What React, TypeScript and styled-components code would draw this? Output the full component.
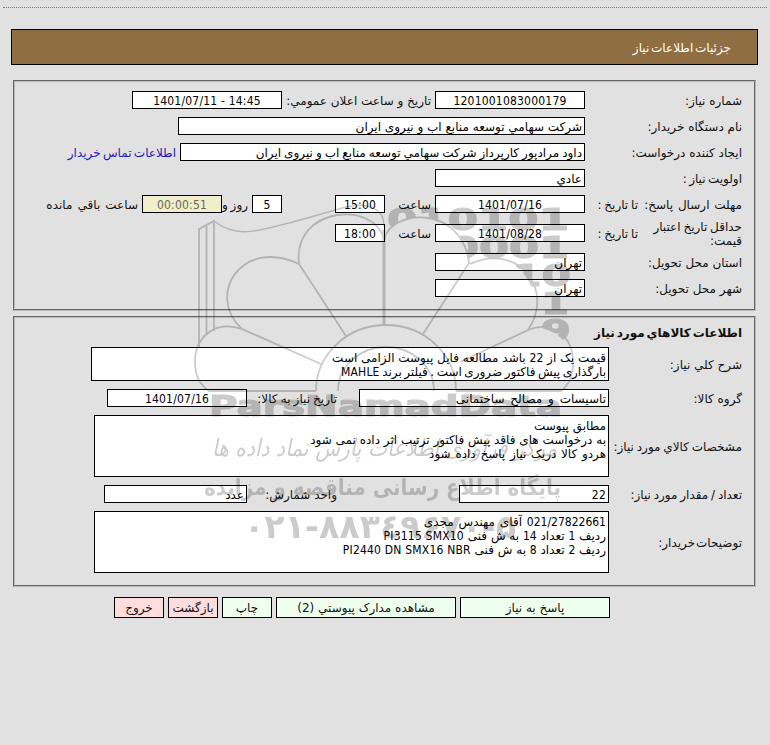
import React from "react";
import styled, { createGlobalStyle } from "styled-components";

const GlobalStyle = createGlobalStyle`
  *, *::before, *::after { box-sizing: border-box; }
  body {
    margin: 0;
    background: #e1e1e1;
    color: #111;
    font: 12px/14px "DejaVu Sans", Tahoma, sans-serif;
  }
`;

const Page = styled.div`
  position: relative;
  width: 770px;
  height: 745px;
  overflow: hidden;
  direction: rtl;
`;

const TopRule = styled.div`
  margin: 7px 3px 0 3px;
  border-top: 1px dotted #777;
`;

const TitleBar = styled.header`
  display: flex;
  align-items: center;
  height: 36px;
  margin: 21px 12px 0 11px;
  padding: 2px 26px 0;
  border: 1px solid #000;
  background: #8f6e43;
  color: #fff;
  word-spacing: -2px;
`;

const Section = styled.section<{ $h: number; $gap: number }>`
  width: 743px;
  height: ${(p) => p.$h}px;
  margin: ${(p) => p.$gap}px 14px 0 13px;
  padding: 9px 12px 0 0;
  border: 2px groove #b9b9b9;
`;

const Row = styled.div<{ $h?: number; $gap?: number }>`
  display: flex;
  align-items: center;
  height: ${(p) => p.$h ?? 18}px;
  margin-bottom: ${(p) => p.$gap ?? 8}px;
`;

const Cell = styled.span<{ $w: number; $ws?: number }>`
  flex: none;
  width: ${(p) => p.$w}px;
  padding-top: 1px;
  white-space: nowrap;
  word-spacing: ${(p) => p.$ws ?? 0}px;
`;

const Wrapped = styled(Cell)`
  white-space: normal;
  padding-left: 8px;
`;

const Field = styled.div<{ $w: number; $ws?: number }>`
  flex: none;
  width: ${(p) => p.$w}px;
  height: 18px;
  padding: 1px 2px 0;
  border: 1px solid #000;
  background: #fff;
  color: #000;
  line-height: 16px;
  white-space: nowrap;
  word-spacing: ${(p) => p.$ws ?? 0}px;
`;

const NumberField = styled(Field)<{ $muted?: boolean; $start?: boolean }>`
  background: ${(p) => (p.$muted ? "#f0eecb" : "#fff")};
  color: ${(p) => (p.$muted ? "#6a6a58" : "#000")};
  direction: ltr;
  text-align: ${(p) => (p.$start ? "right" : "center")};
  font-family: "DejaVu Sans Condensed", "DejaVu Sans", sans-serif;
  font-stretch: condensed;
  letter-spacing: 0.2px;
`;

const Latin = styled.bdi`
  font-family: "DejaVu Sans Condensed", "DejaVu Sans", sans-serif;
  font-stretch: condensed;
  letter-spacing: 0.2px;
`;

const Area = styled(Field)`
  height: 100%;
  padding: 3px 2px 2px;
  line-height: 14px;
`;

const Line = styled.div<{ $ws?: number }>`
  word-spacing: ${(p) => p.$ws ?? 0}px;
`;

const Gap = styled.span<{ $w: number }>`
  flex: none;
  width: ${(p) => p.$w}px;
`;

const ContactLink = styled.a`
  padding-top: 1px;
  color: #1a1ab8;
  white-space: nowrap;
  word-spacing: -1.5px;
`;

const Heading = styled.h2`
  height: 20px;
  margin: 0;
  font-size: 12px;
  line-height: 12px;
  word-spacing: -2.3px;
`;

const Actions = styled.nav`
  display: flex;
  gap: 4px;
  margin: 10px 160px 0 0;
`;

const Button = styled.button<{ $w: number; $danger?: boolean }>`
  width: ${(p) => p.$w}px;
  height: 21px;
  padding: 0;
  border: 1px solid #000;
  background: ${(p) => (p.$danger ? "#ffdddd" : "#eeffee")};
  color: #111;
  font: inherit;
  white-space: nowrap;
`;

const Mark = styled.svg`
  position: absolute;
  top: 190px;
  left: 180px;
  pointer-events: none;
  opacity: 0.2;
`;

const wide = { lengthAdjust: "spacingAndGlyphs" as const, direction: "ltr" };

function Watermark() {
  return (
    <Mark width="400" height="370" viewBox="180 190 400 370">
      <defs>
        <mask id="petals" maskUnits="userSpaceOnUse" x="180" y="190" width="400" height="210">
          <rect x="180" y="190" width="400" height="210" fill="#fff" />
          <path
            fill="#000"
            d="M384 325V240C390 209 462 204 469 263C512 244 548 285 530 328C546 326 560 334 567 345V391H384Z"
          />
        </mask>
      </defs>
      <g
        mask="url(#petals)"
        fontFamily="DejaVu Sans"
        fontWeight="bold"
        fontSize="30"
        stroke="#000"
        strokeWidth="1.2"
      >
        <text x="387" y="230" textLength="182" {...wide}>010101</text>
        <text x="449" y="258" textLength="120" {...wide}>0001</text>
        <text x="512" y="286" textLength="59" {...wide}>10</text>
        <text x="541" y="314" textLength="28" {...wide}>1</text>
        <text x="541" y="341" textLength="30" {...wide}>9</text>
      </g>
      <g fill="none" stroke="#000" strokeWidth="1.8">
        <path d="M199 347V229L214 221V331M206.500 335V226" />
        <path d="M214 221C238 240 262 230 300 220L346 207C368 202 384 208 384 226" strokeWidth="1.3" />
        <path d="M384 325V230" strokeWidth="3" />
        <path d="M346 336L299 264C292 206 376 200 384 240" />
        <path d="M321 364L242 329C205 295 242 237 299 264" />
        <path d="M242 329C212 319 195 340 195 362Q195 382 209 391H316" />
        <path d="M423 334L469 263C462 204 390 209 384 240" />
        <path d="M460 362L528 330C556 288 516 242 470 264" />
        <path d="M528 330C552 320 573 336 573 362Q573 382 561 391H456" />
        <path d="M316 391A70 66 0 0 1 456 391M338 391A48 44 0 0 1 434 391" />
      </g>
      <g fontFamily="DejaVu Sans" fontWeight="bold">
        <text x="209" y="416" fontSize="28" textLength="353" stroke="#000" strokeWidth="1.2" {...wide}>
          ParsNamadData
        </text>
        <text x="204" y="495" fontSize="23" textLength="357" {...wide}>
          پایگاه اطلاع رسانی مناقصه و مزایده
        </text>
        <text x="244" y="538" fontSize="33" textLength="272" {...wide}>۰۲۱-۸۸۳٤۹۶۷۰-۵</text>
      </g>
      <text x="212" y="456" fontFamily="DejaVu Sans" fontStyle="italic" fontSize="24" textLength="345" {...wide}>
        مرکز فرآوری اطلاعات پارس نماد داده ها
      </text>
    </Mark>
  );
}

export default function App() {
  return (
    <>
      <GlobalStyle />
      <Page>
        <TopRule />
        <TitleBar>جزئیات اطلاعات نیاز</TitleBar>

        <Section $h={231} $gap={15}>
          <Row>
            <Cell $w={157}>شماره نیاز:</Cell>
            <NumberField $w={150}>1201001083000179</NumberField>
            <Gap $w={4} />
            <Cell $w={149}>تاریخ و ساعت اعلان عمومي:</Cell>
            <NumberField $w={150}>1401/07/11 - 14:45</NumberField>
          </Row>
          <Row>
            <Cell $w={157}>نام دستگاه خریدار:</Cell>
            <Field $w={407}>شرکت سهامي توسعه منابع اب و نیروی ایران</Field>
          </Row>
          <Row>
            <Cell $w={157}>ایجاد کننده درخواست:</Cell>
            <Field $w={405} $ws={-0.8}>داود مرادپور کارپرداز شرکت سهامي توسعه منابع اب و نیروی ایران</Field>
            <Gap $w={4} />
            <ContactLink>اطلاعات تماس خریدار</ContactLink>
          </Row>
          <Row>
            <Cell $w={157} $ws={-1.5}>اولویت نیاز :</Cell>
            <Field $w={150}>عادي</Field>
          </Row>
          <Row $gap={9}>
            <Cell $w={104} $ws={1}>مهلت ارسال پاسخ:</Cell>
            <Cell $w={53} $ws={-1}>تا تاریخ :</Cell>
            <NumberField $w={150}>1401/07/16</NumberField>
            <Gap $w={4} />
            <Cell $w={46}>ساعت</Cell>
            <NumberField $w={50}>15:00</NumberField>
            <Gap $w={53} />
            <NumberField $w={30}>5</NumberField>
            <Gap $w={4} />
            <Cell $w={26} $ws={-1}>روز و</Cell>
            <NumberField $w={80} $muted>00:00:51</NumberField>
            <Gap $w={4} />
            <Cell $w={94} $ws={1.3}>ساعت باقي مانده</Cell>
          </Row>
          <Row $h={22} $gap={9}>
            <Wrapped $w={104} $ws={-1}>حداقل تاریخ اعتبار قیمت:</Wrapped>
            <Cell $w={53} $ws={-1}>تا تاریخ :</Cell>
            <NumberField $w={150}>1401/08/28</NumberField>
            <Gap $w={4} />
            <Cell $w={46}>ساعت</Cell>
            <NumberField $w={50}>18:00</NumberField>
          </Row>
          <Row>
            <Cell $w={157}>استان محل تحویل:</Cell>
            <Field $w={150}>تهران</Field>
          </Row>
          <Row>
            <Cell $w={157}>شهر محل تحویل:</Cell>
            <Field $w={150}>تهران</Field>
          </Row>
        </Section>

        <Section $h={271} $gap={5}>
          <Heading>اطلاعات کالاهاي مورد نیاز</Heading>
          <Row $h={34}>
            <Cell $w={133}>شرح کلي نیاز:</Cell>
            <Area $w={518}>
              <Line>
                قیمت یک از <Latin>22</Latin> باشد مطالعه فایل پیوست الزامی است
              </Line>
              <Line $ws={-1.3}>
                بارگذاری پیش فاکتور ضروری است . فیلتر برند <Latin>MAHLE</Latin>
              </Line>
            </Area>
          </Row>
          <Row>
            <Cell $w={133}>گروه کالا:</Cell>
            <Field $w={250} $ws={2}>تاسیسات و مصالح ساختمانی</Field>
            <Gap $w={22} />
            <Cell $w={90} $ws={-0.7}>تاریخ نیاز به کالا:</Cell>
            <NumberField $w={140}>1401/07/16</NumberField>
          </Row>
          <Row $h={62}>
            <Cell $w={133} $ws={-1}>مشخصات کالاي مورد نیاز:</Cell>
            <Area $w={515}>
              <Line>مطابق پیوست</Line>
              <Line>به درخواست های فاقد پیش فاکتور ترتیب اثر داده نمی شود</Line>
              <Line $ws={0.9}>هردو کالا دریک نیاز پاسخ داده شود</Line>
            </Area>
          </Row>
          <Row>
            <Cell $w={133} $ws={-1}>تعداد / مقدار مورد نیاز:</Cell>
            <NumberField $w={150} $start>22</NumberField>
            <Gap $w={122} />
            <Cell $w={90}>واحد شمارش:</Cell>
            <Field $w={143}>عدد</Field>
          </Row>
          <Row $h={62}>
            <Cell $w={133} $ws={-3}>توضیحات خریدار:</Cell>
            <Area $w={515}>
              <Line $ws={1}>
                <Latin>021/27822661</Latin> آقای مهندس مجدی
              </Line>
              <Line>
                ردیف <Latin>1</Latin> تعداد <Latin>14</Latin> به ش فنی <Latin>PI3115 SMX10</Latin>
              </Line>
              <Line>
                ردیف <Latin>2</Latin> تعداد <Latin>8</Latin> به ش فنی <Latin>PI2440 DN SMX16 NBR</Latin>
              </Line>
            </Area>
          </Row>
        </Section>

        <Actions>
          <Button $w={150}>پاسخ به نیاز</Button>
          <Button $w={180}>مشاهده مدارک پیوستي (2)</Button>
          <Button $w={50}>چاپ</Button>
          <Button $w={50} $danger>بازگشت</Button>
          <Button $w={50} $danger>خروج</Button>
        </Actions>
        <Watermark />
      </Page>
    </>
  );
}
